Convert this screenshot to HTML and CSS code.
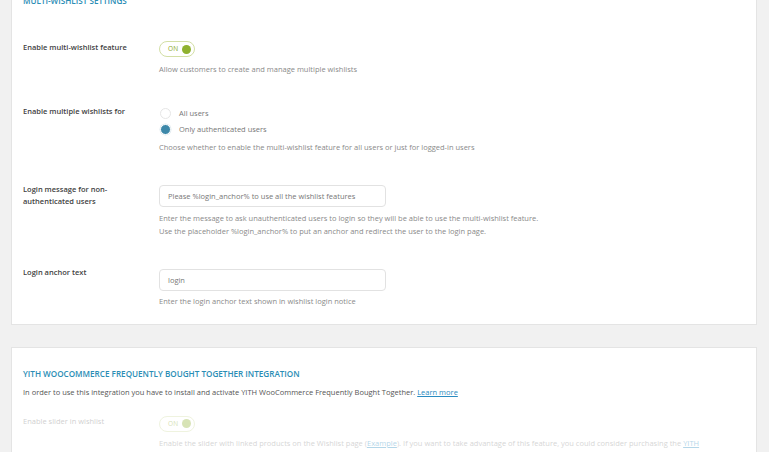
FILE: index.html
```html
<!DOCTYPE html>
<html lang="en">
<head>
<meta charset="utf-8">
<title>Wishlist settings</title>
<link rel="stylesheet" href="styles.css">
</head>
<body>
<div class="page">
  <section class="card card-first">
    <h2 class="card-title">MULTI-WISHLIST SETTINGS</h2>
    <div class="row row-first">
      <div class="label">Enable multi-wishlist feature</div>
      <div class="field">
        <span class="toggle"><span class="toggle-text">ON</span><span class="toggle-knob"></span></span>
        <p class="desc desc-toggle">Allow customers to create and manage multiple wishlists</p>
      </div>
    </div>
    <div class="row">
      <div class="label">Enable multiple wishlists for</div>
      <div class="field">
        <div class="radio-item"><span class="radio"></span><span class="radio-label">All users</span></div>
        <div class="radio-item"><span class="radio radio-on"></span><span class="radio-label">Only authenticated users</span></div>
        <p class="desc desc-radio">Choose whether to enable the multi-wishlist feature for all users or just for logged-in users</p>
      </div>
    </div>
    <div class="row row-tight">
      <div class="label label-two">Login message for non-<br>authenticated users</div>
      <div class="field">
        <div class="input">Please %login_anchor% to use all the wishlist features</div>
        <p class="desc desc-input">Enter the message to ask unauthenticated users to login so they will be able to use the multi-wishlist feature.<br>Use the placeholder %login_anchor% to put an anchor and redirect the user to the login page.</p>
      </div>
    </div>
    <div class="row row-tight">
      <div class="label">Login anchor text</div>
      <div class="field">
        <div class="input">login</div>
        <p class="desc desc-input">Enter the login anchor text shown in wishlist login notice</p>
      </div>
    </div>
  </section>

  <section class="card card-second">
    <h2 class="card-title">YITH WOOCOMMERCE FREQUENTLY BOUGHT TOGETHER INTEGRATION</h2>
    <p class="intro">In order to use this integration you have to install and activate YITH WooCommerce Frequently Bought Together. <a href="#" class="link">Learn more</a></p>
    <div class="row row-disabled">
      <div class="label label-light">Enable slider in wishlist</div>
      <div class="field">
        <span class="toggle"><span class="toggle-text">ON</span><span class="toggle-knob"></span></span>
        <p class="desc desc-toggle">Enable the slider with linked products on the Wishlist page (<a href="#" class="link">Example</a>). If you want to take advantage of this feature, you could consider purchasing the <a href="#" class="link">YITH</a><br><a href="#" class="link">WooCommerce Frequently Bought Together Premium</a> plugin.</p>
      </div>
    </div>
  </section>
</div>
</body>
</html>
```

FILE: styles.css
```css
* { box-sizing: border-box; }

html, body {
  margin: 0;
  padding: 0;
  background: #f1f1f1;
  font-family: "Open Sans", "Noto Sans", sans-serif;
  font-size: 7.5px;
  line-height: 13px;
  color: #444;
  overflow: hidden;
}

.page {
  padding: 0 12px 0 11px;
}

.card {
  background: #fff;
  border: 1px solid #e4e4e4;
  padding: 0 11px;
}

.card-first {
  margin-top: -20px;
  padding-top: 12.5px;
  padding-bottom: 16px;
}

.card-second {
  margin-top: 22px;
  padding-top: 19px;
  padding-bottom: 20px;
}

.card-title {
  margin: 0;
  font-size: 8.15px;
  font-weight: 600;
  line-height: 13px;
  color: #2a8db5;
}

.row {
  display: grid;
  grid-template-columns: 136px 1fr;
  margin-top: 29.5px;
}

.row-first {
  margin-top: 34px;
}

.row-tight {
  margin-top: 28.5px;
}

.label {
  font-weight: 600;
  color: #3f3f3f;
}

.label-two {
  line-height: 12px;
}

.field {
  display: flex;
  flex-direction: column;
  align-items: flex-start;
}

.toggle {
  display: inline-flex;
  align-items: center;
  justify-content: space-between;
  width: 36px;
  height: 16px;
  border: 1px solid #d3dfa5;
  border-radius: 8px;
  padding: 0 3px 0 8px;
  margin-top: 0.5px;
}

.toggle-text {
  font-size: 6.5px;
  line-height: 10px;
  color: #8aa92a;
  letter-spacing: 0.3px;
}

.toggle-knob {
  width: 9px;
  height: 9px;
  border-radius: 50%;
  background: #8fb12f;
}

.desc {
  margin: 0;
  color: #8a8a8a;
}

.desc-toggle { margin-top: 5.5px; }
.desc-radio { margin-top: 3.5px; }
.desc-input { margin-top: 4.5px; }

.radio-item {
  display: flex;
  align-items: center;
  height: 16px;
}

.radio-item:first-child { margin-top: 0.5px; }

.radio {
  width: 11px;
  height: 11px;
  border-radius: 50%;
  border: 1px solid #e6e6e6;
  background: #fff;
  margin-left: 1px;
  margin-right: 8px;
}

.radio-on {
  border: 1px solid #fff;
  background: #3d88a9;
  box-shadow: 0 0 0 0.5px #dfe9ee;
}

.radio-label {
  color: #777;
}

.input {
  width: 227px;
  height: 22px;
  border: 1px solid #e2e2e2;
  border-radius: 4px;
  padding: 0 8px;
  line-height: 20px;
  color: #777;
  margin-top: 2.5px;
  background: #fff;
}

.intro {
  margin: 6px 0 0;
  color: #555;
}

.link {
  color: #2a8bc0;
  text-decoration: underline;
}

.row-disabled {
  margin-top: 16px;
  opacity: 0.35;
}

.label-light {
  font-weight: 400;
  color: #777;
}
```
